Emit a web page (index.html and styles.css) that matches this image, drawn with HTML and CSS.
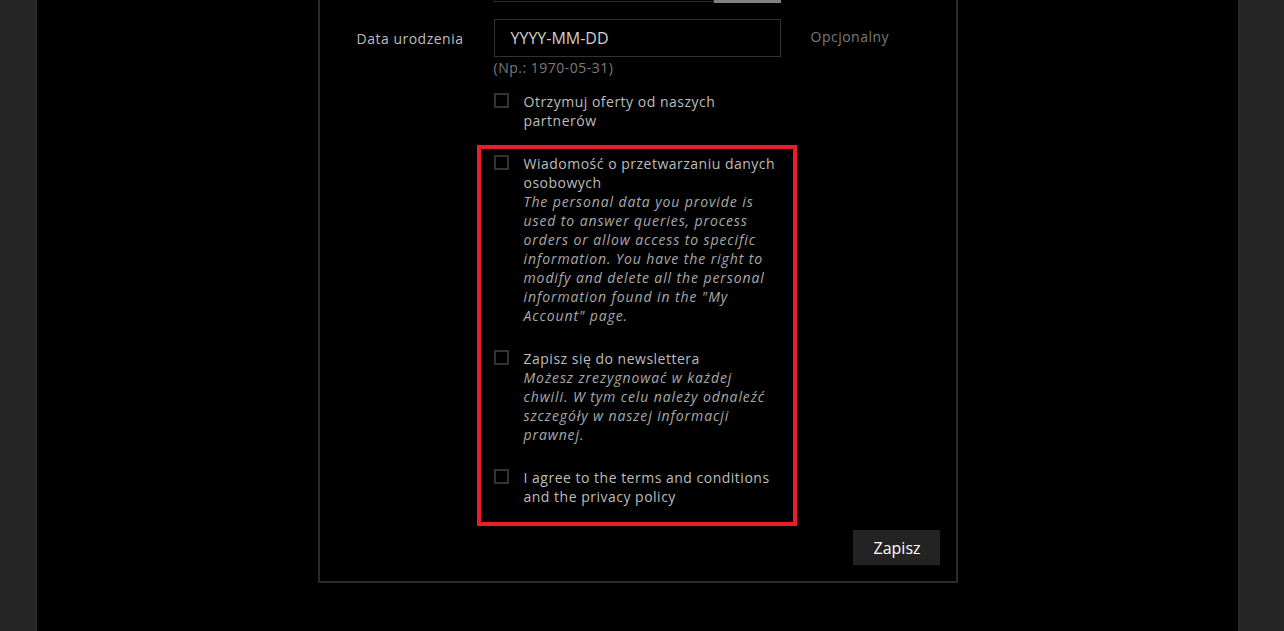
FILE: index.html
```html
<!DOCTYPE html>
<html lang="pl">
<head>
<meta charset="utf-8">
<title>Formularz</title>
<link rel="stylesheet" href="styles.css">
</head>
<body>
<div class="side side-left"></div>
<main class="main">
  <div class="panel">
    <div class="row row-prev">
      <div class="label"></div>
      <div class="field">
        <div class="input-group">
          <div class="input input-prev"></div>
          <div class="show-btn"></div>
        </div>
      </div>
      <div class="comment"></div>
    </div>
    <div class="row row-date">
      <div class="label">Data urodzenia</div>
      <div class="field">
        <div class="input input-date">YYYY-MM-DD</div>
      </div>
      <div class="comment">Opcjonalny</div>
    </div>
    <div class="row">
      <div class="label"></div>
      <div class="field">
        <div class="help">(Np.: 1970-05-31)</div>
        <div class="check-row check-first">
          <span class="box"></span>
          <span class="check-text">Otrzymuj oferty od naszych partnerów</span>
        </div>
        <div class="highlight">
          <div class="check-row">
            <span class="box"></span>
            <span class="check-text">Wiadomość o przetwarzaniu danych osobowych<br><em>The personal data you provide is used to answer queries, process orders or allow access to specific information. You have the right to modify and delete all the personal information found in the "My Account" page.</em></span>
          </div>
          <div class="check-row">
            <span class="box"></span>
            <span class="check-text">Zapisz się do newslettera<br><em>Możesz zrezygnować w każdej chwili. W tym celu należy odnaleźć szczegóły w naszej informacji prawnej.</em></span>
          </div>
          <div class="check-row">
            <span class="box"></span>
            <span class="check-text">I agree to the terms and conditions and the privacy policy</span>
          </div>
        </div>
      </div>
      <div class="comment"></div>
    </div>
    <div class="actions">
      <button class="save" type="button">Zapisz</button>
    </div>
  </div>
</main>
<div class="side side-right"></div>
</body>
</html>
```
FILE: styles.css
```css
html, body {
  margin: 0;
  padding: 0;
  height: 100%;
  overflow: hidden;
}
body {
  display: flex;
  background: #000;
  font-family: "Open Sans", "Noto Sans", sans-serif;
  font-size: 14px;
  line-height: 19px;
  letter-spacing: 0.5px;
  color: #bdbdbd;
}
.side {
  background: #262626;
  flex: none;
}
.side-left {
  width: 37px;
  box-shadow: inset -2px 0 0 #2c2c2c;
}
.side-right {
  width: 46px;
}
.main {
  flex: 1;
  display: flex;
  justify-content: center;
  align-items: flex-start;
}
.panel {
  width: 636px;
  border: 2px solid #2b2b2b;
  margin-top: -60px;
  padding-top: 22px;
  padding-bottom: 16px;
}
.row {
  display: grid;
  grid-template-columns: 174px 287px 1fr;
}
.label {
  text-align: right;
  padding-right: 30px;
  color: #bdbdbd;
}
.comment {
  padding-left: 30px;
  color: #7b7b7b;
}
.row-date .label,
.row-date .comment {
  align-self: center;
}
.row-date .comment {
  margin-top: -3px;
}
.row-date {
  margin-top: 16px;
}
.input-group {
  display: flex;
}
.input {
  border: 1px solid #333;
  height: 36px;
  box-sizing: content-box;
}
.input-prev {
  flex: 1;
  border-color: #2e2e2e;
}
.show-btn {
  width: 67px;
  height: 39px;
  background: #808080;
}
.input-date {
  padding-left: 16px;
  font-size: 16px;
  line-height: 36px;
  letter-spacing: 0;
  color: #d0d0d0;
}
.help {
  color: #7a7a7a;
  margin-top: 1px;
}
.check-row {
  display: flex;
  gap: 15px;
}
.check-first {
  margin-top: 15px;
}
.box {
  flex: none;
  width: 11px;
  height: 11px;
  border: 2px solid #333;
  margin-top: 1px;
}
.check-text {
  color: #bdbdbd;
}
.check-text em {
  color: #a9a9a9;
  letter-spacing: 0.9px;
}
.highlight {
  margin: 15px -16px 0 -17px;
  border: 4px solid #ec1c2a;
  padding: 5px 12px 16px 13px;
  display: flex;
  flex-direction: column;
  gap: 24px;
}
.actions {
  display: flex;
  justify-content: flex-end;
  padding-right: 16px;
  margin-top: 4px;
}
.save {
  background: #232323;
  color: #fff;
  border: 0;
  font-family: "Open Sans", "Noto Sans", sans-serif;
  font-size: 16px;
  letter-spacing: 0;
  height: 35px;
  padding: 0 21px;
  width: 87px;
  cursor: pointer;
}
```
